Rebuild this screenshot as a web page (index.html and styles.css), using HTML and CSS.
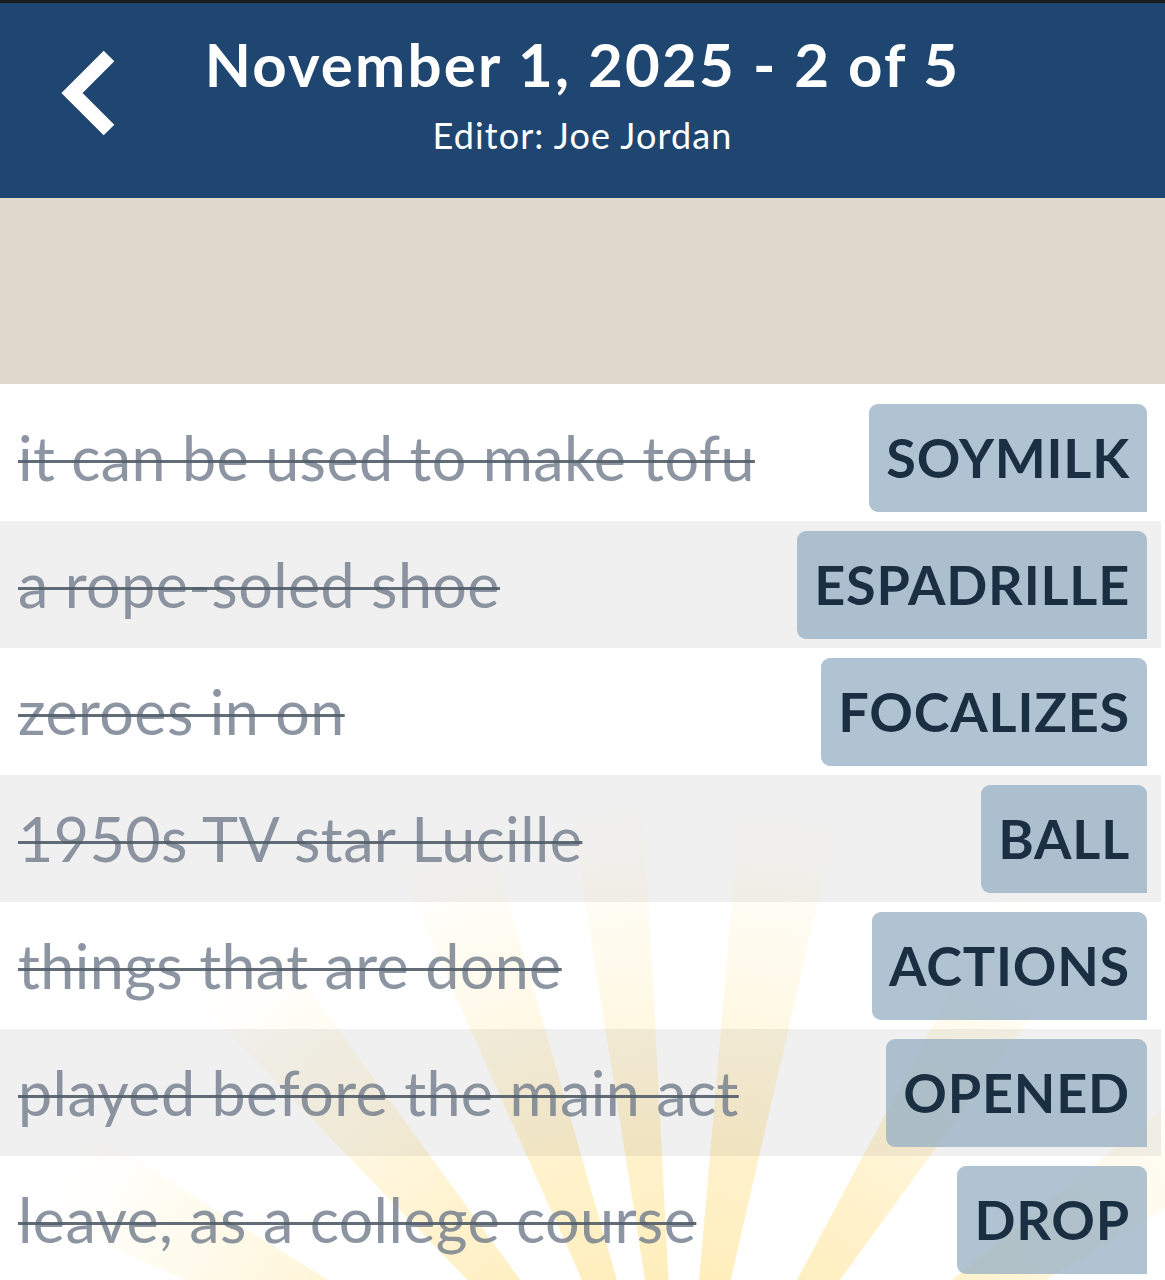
FILE: index.html
```html
<!DOCTYPE html>
<html>
<head>
<meta charset="utf-8">
<link rel="stylesheet" href="styles.css">
</head>
<body>
<div class="topline"></div>
<header class="header">
  <div class="back">
    <svg width="130" height="150" viewBox="0 0 130 150">
      <polyline points="109,53 72,90 109,127" fill="none" stroke="#ffffff" stroke-width="15" stroke-linejoin="miter" stroke-linecap="butt"/>
    </svg>
  </div>
  <div class="titles">
    <div class="title">November 1, 2025 - 2 of 5</div>
    <div class="subtitle">Editor: Joe Jordan</div>
  </div>
  <div></div>
</header>
<div class="banner"></div>
<main class="list">
  <svg class="rays" width="1165" height="896" viewBox="0 0 1165 896">
    <defs>
      <radialGradient id="rg" gradientUnits="userSpaceOnUse" cx="680" cy="1116" r="820">
        <stop offset="0" stop-color="#ffd659" stop-opacity="0.6"/>
        <stop offset="0.45" stop-color="#ffdc75" stop-opacity="0.35"/>
        <stop offset="0.85" stop-color="#ffe79e" stop-opacity="0"/>
      </radialGradient>
    </defs>
    <g fill="url(#rg)">
      <polygon points="680,1116 -142,750 -83,639"/>
      <polygon points="680,1116 55,469 151,388"/>
      <polygon points="680,1116 314,294 432,251"/>
      <polygon points="680,1116 539,227 633,217"/>
      <polygon points="680,1116 758,219 882,239"/>
      <polygon points="680,1116 1103,321 1209,388"/>
      <polygon points="680,1116 1379,550 1451,652"/>
    </g>
  </svg>
  <div class="row"><span class="clue">it can be used to make tofu</span><span class="answer">SOYMILK</span></div>
  <div class="row"><span class="clue">a rope-soled shoe</span><span class="answer">ESPADRILLE</span></div>
  <div class="row"><span class="clue">zeroes in on</span><span class="answer">FOCALIZES</span></div>
  <div class="row"><span class="clue">1950s TV star Lucille</span><span class="answer">BALL</span></div>
  <div class="row"><span class="clue">things that are done</span><span class="answer">ACTIONS</span></div>
  <div class="row"><span class="clue">played before the main act</span><span class="answer">OPENED</span></div>
  <div class="row"><span class="clue">leave, as a college course</span><span class="answer">DROP</span></div>
</main>
</body>
</html>
```
FILE: styles.css
```css
html, body {
  margin: 0;
  padding: 0;
}
body {
  width: 1165px;
  height: 1280px;
  overflow: hidden;
  background: #ffffff;
  font-family: "Lato", "Open Sans", sans-serif;
}
.topline {
  height: 3px;
  background: #1c1c1c;
}
.header {
  height: 195px;
  background: #1f4670;
  display: grid;
  grid-template-columns: 1fr auto 1fr;
  align-items: start;
}
.back svg {
  display: block;
}
.titles {
  display: flex;
  flex-direction: column;
  align-items: center;
  color: #ffffff;
}
.title {
  font-weight: 700;
  font-size: 60px;
  line-height: 70px;
  margin-top: 26px;
  letter-spacing: 2.2px;
}
.subtitle {
  font-weight: 400;
  font-size: 36px;
  line-height: 44px;
  margin-top: 14px;
  letter-spacing: 1.1px;
}
.banner {
  height: 186px;
  background: #dfd8cc;
}
.list {
  position: relative;
  padding-top: 10px;
  background: #ffffff;
}
.rays {
  position: absolute;
  left: 0;
  top: 0;
  z-index: 0;
}
.row {
  position: relative;
  z-index: 1;
  width: 1161px;
  height: 127px;
  box-sizing: border-box;
  padding: 0 14px 0 18px;
  display: flex;
  align-items: center;
  justify-content: space-between;
}
.row:nth-of-type(even) {
  background: rgba(0, 0, 0, 0.059);
}
.clue {
  font-size: 61px;
  letter-spacing: 0.4px;
  color: rgba(115, 126, 140, 0.82);
  text-decoration: line-through;
  text-decoration-color: rgba(80, 92, 104, 0.9);
  text-decoration-thickness: 2.5px;
  white-space: nowrap;
}
.answer {
  height: 108px;
  display: flex;
  align-items: center;
  padding: 0 17px;
  border-radius: 9px 9px 0 9px;
  background: rgba(150, 175, 195, 0.75);
  color: #1b2f42;
  font-weight: 700;
  font-size: 54px;
  letter-spacing: 0.8px;
}
```
